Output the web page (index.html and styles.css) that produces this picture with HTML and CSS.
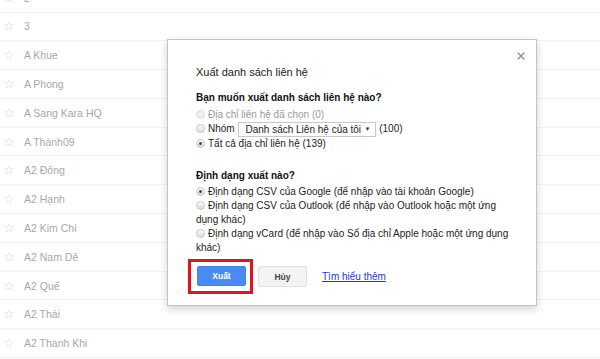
FILE: index.html
```html
<!DOCTYPE html>
<html lang="vi">
<head>
<meta charset="utf-8">
<title>Xuất danh sách liên hệ</title>
<link rel="stylesheet" href="styles.css">
</head>
<body>
<div class="list">
  <div class="row"><svg class="star" viewBox="0 0 10 10"><path d="M5 0.8 L6.2 3.6 L9.2 3.8 L6.9 5.8 L7.6 8.8 L5 7.2 L2.4 8.8 L3.1 5.8 L0.8 3.8 L3.8 3.6 Z"/></svg><span>2</span></div>
  <div class="row"><svg class="star" viewBox="0 0 10 10"><path d="M5 0.8 L6.2 3.6 L9.2 3.8 L6.9 5.8 L7.6 8.8 L5 7.2 L2.4 8.8 L3.1 5.8 L0.8 3.8 L3.8 3.6 Z"/></svg><span>3</span></div>
  <div class="row"><svg class="star" viewBox="0 0 10 10"><path d="M5 0.8 L6.2 3.6 L9.2 3.8 L6.9 5.8 L7.6 8.8 L5 7.2 L2.4 8.8 L3.1 5.8 L0.8 3.8 L3.8 3.6 Z"/></svg><span>A Khue</span></div>
  <div class="row"><svg class="star" viewBox="0 0 10 10"><path d="M5 0.8 L6.2 3.6 L9.2 3.8 L6.9 5.8 L7.6 8.8 L5 7.2 L2.4 8.8 L3.1 5.8 L0.8 3.8 L3.8 3.6 Z"/></svg><span>A Phong</span></div>
  <div class="row"><svg class="star" viewBox="0 0 10 10"><path d="M5 0.8 L6.2 3.6 L9.2 3.8 L6.9 5.8 L7.6 8.8 L5 7.2 L2.4 8.8 L3.1 5.8 L0.8 3.8 L3.8 3.6 Z"/></svg><span>A Sang Kara HQ</span></div>
  <div class="row"><svg class="star" viewBox="0 0 10 10"><path d="M5 0.8 L6.2 3.6 L9.2 3.8 L6.9 5.8 L7.6 8.8 L5 7.2 L2.4 8.8 L3.1 5.8 L0.8 3.8 L3.8 3.6 Z"/></svg><span>A Thành09</span></div>
  <div class="row"><svg class="star" viewBox="0 0 10 10"><path d="M5 0.8 L6.2 3.6 L9.2 3.8 L6.9 5.8 L7.6 8.8 L5 7.2 L2.4 8.8 L3.1 5.8 L0.8 3.8 L3.8 3.6 Z"/></svg><span>A2 Đông</span></div>
  <div class="row"><svg class="star" viewBox="0 0 10 10"><path d="M5 0.8 L6.2 3.6 L9.2 3.8 L6.9 5.8 L7.6 8.8 L5 7.2 L2.4 8.8 L3.1 5.8 L0.8 3.8 L3.8 3.6 Z"/></svg><span>A2 Hạnh</span></div>
  <div class="row"><svg class="star" viewBox="0 0 10 10"><path d="M5 0.8 L6.2 3.6 L9.2 3.8 L6.9 5.8 L7.6 8.8 L5 7.2 L2.4 8.8 L3.1 5.8 L0.8 3.8 L3.8 3.6 Z"/></svg><span>A2 Kim Chi</span></div>
  <div class="row"><svg class="star" viewBox="0 0 10 10"><path d="M5 0.8 L6.2 3.6 L9.2 3.8 L6.9 5.8 L7.6 8.8 L5 7.2 L2.4 8.8 L3.1 5.8 L0.8 3.8 L3.8 3.6 Z"/></svg><span>A2 Nam Dê</span></div>
  <div class="row"><svg class="star" viewBox="0 0 10 10"><path d="M5 0.8 L6.2 3.6 L9.2 3.8 L6.9 5.8 L7.6 8.8 L5 7.2 L2.4 8.8 L3.1 5.8 L0.8 3.8 L3.8 3.6 Z"/></svg><span>A2 Quế</span></div>
  <div class="row"><svg class="star" viewBox="0 0 10 10"><path d="M5 0.8 L6.2 3.6 L9.2 3.8 L6.9 5.8 L7.6 8.8 L5 7.2 L2.4 8.8 L3.1 5.8 L0.8 3.8 L3.8 3.6 Z"/></svg><span>A2 Thái</span></div>
  <div class="row"><svg class="star" viewBox="0 0 10 10"><path d="M5 0.8 L6.2 3.6 L9.2 3.8 L6.9 5.8 L7.6 8.8 L5 7.2 L2.4 8.8 L3.1 5.8 L0.8 3.8 L3.8 3.6 Z"/></svg><span>A2 Thanh Khi</span></div>
</div>

<div class="dialog">
  <svg class="close" viewBox="0 0 10 10"><path d="M1 1 L9 9 M9 1 L1 9"/></svg>
  <div class="title">Xuất danh sách liên hệ</div>
  <div class="heading h1">Bạn muốn xuất danh sách liên hệ nào?</div>
  <div class="opts">
    <div class="opt disabled"><span class="radio"></span>Địa chỉ liên hệ đã chọn (0)</div>
    <div class="opt"><span class="radio"></span>Nhóm <span class="select"><span>Danh sách Liên hệ của tôi</span><span class="caret">▼</span></span> (100)</div>
    <div class="opt"><span class="radio on"></span>Tất cả địa chỉ liên hệ (139)</div>
  </div>
  <div class="heading h2">Định dạng xuất nào?</div>
  <div class="opts fmt">
    <div class="opt"><span class="radio on"></span>Định dạng CSV của Google (để nhập vào tài khoản Google)</div>
    <div class="opt"><span class="radio"></span>Định dạng CSV của Outlook (để nhập vào Outlook hoặc một ứng dụng khác)</div>
    <div class="opt"><span class="radio"></span>Định dạng vCard (để nhập vào Sổ địa chỉ Apple hoặc một ứng dụng khác)</div>
  </div>
  <div class="actions">
    <span class="highlight"><span class="btn primary">Xuất</span></span>
    <span class="btn">Hủy</span>
    <a class="link" href="#">Tìm hiểu thêm</a>
  </div>
</div>
</body>
</html>
```

FILE: styles.css
```css
html, body {
  margin: 0;
  padding: 0;
  background: #fff;
  overflow: hidden;
}
body {
  width: 600px;
  height: 359px;
  position: relative;
  font-family: "Liberation Sans", Arial, sans-serif;
}
.list {
  margin-top: -16.3px;
}
.row {
  height: 28.8px;
  box-sizing: border-box;
  border-bottom: 1px solid #f1f1f1;
  display: flex;
  align-items: center;
  padding-left: 4px;
  font-size: 10.5px;
  color: #a8a8a8;
}
.star {
  width: 10px;
  height: 10px;
  margin-right: 10px;
  fill: none;
  stroke: #e2e2e2;
  stroke-width: 0.8;
}
.dialog {
  position: absolute;
  left: 167px;
  top: 39px;
  width: 370px;
  height: 267px;
  box-sizing: border-box;
  background: #fff;
  border: 1px solid #c4c4c4;
  box-shadow: 0 3px 8px rgba(0,0,0,0.18);
  padding: 25px 24px 0 28px;
  color: #222;
}
.close {
  position: absolute;
  right: 11px;
  top: 12px;
  width: 8px;
  height: 8px;
  stroke: #8a8a8a;
  stroke-width: 1.6;
}
.title {
  font-size: 11px;
  line-height: 14px;
  color: #222;
}
.heading {
  font-size: 10px;
  font-weight: bold;
  line-height: 14px;
  color: #111;
}
.h1 { margin-top: 12px; }
.h2 { margin-top: 18px; }
.opts { margin-top: 3px; }
.fmt { margin-top: 2px; }
.opt {
  font-size: 10px;
  line-height: 14px;
  color: #222;
  white-space: normal;
}
.opt.disabled { color: #9a9a9a; }
.radio {
  display: inline-block;
  width: 7px;
  height: 7px;
  border-radius: 50%;
  border: 1px solid #c8c8c8;
  background: linear-gradient(#fafafa, #dcdcdc);
  margin: 0 3px 0 0;
  vertical-align: -1px;
  position: relative;
}
.disabled .radio { border-color: #ddd; background: #efefef; }
.radio.on::after {
  content: "";
  position: absolute;
  left: 2px;
  top: 2px;
  width: 3px;
  height: 3px;
  border-radius: 50%;
  background: #444;
}
.select {
  display: inline-flex;
  align-items: center;
  justify-content: space-between;
  width: 138px;
  height: 15px;
  box-sizing: border-box;
  border: 1px solid #c8c8c8;
  padding: 0 5px 0 6px;
  margin-left: 1px;
  vertical-align: middle;
  line-height: 13px;
  white-space: nowrap;
  background: #fff;
}
.caret {
  font-size: 6px;
  color: #333;
}
.actions {
  display: flex;
  align-items: center;
  margin-top: 4px;
  margin-left: -8px;
}
.highlight {
  display: flex;
  border: 3px solid #e0141f;
  padding: 4px 4px 5px 6px;
  margin-right: 5px;
}
.btn {
  width: 49px;
  height: 21px;
  box-sizing: border-box;
  display: flex;
  align-items: center;
  justify-content: center;
  font-size: 8.5px;
  font-weight: bold;
  color: #444;
  background: #f3f3f3;
  border: 1px solid #e0e0e0;
  border-radius: 2px;
  margin-right: 15px;
}
.btn.primary {
  height: 20px;
  margin-right: 0;
  background: #4a8af4;
  border-color: #4584ee;
  color: #fff;
}
.link {
  font-size: 10px;
  color: #1a3bcc;
  text-decoration: underline;
}
```
